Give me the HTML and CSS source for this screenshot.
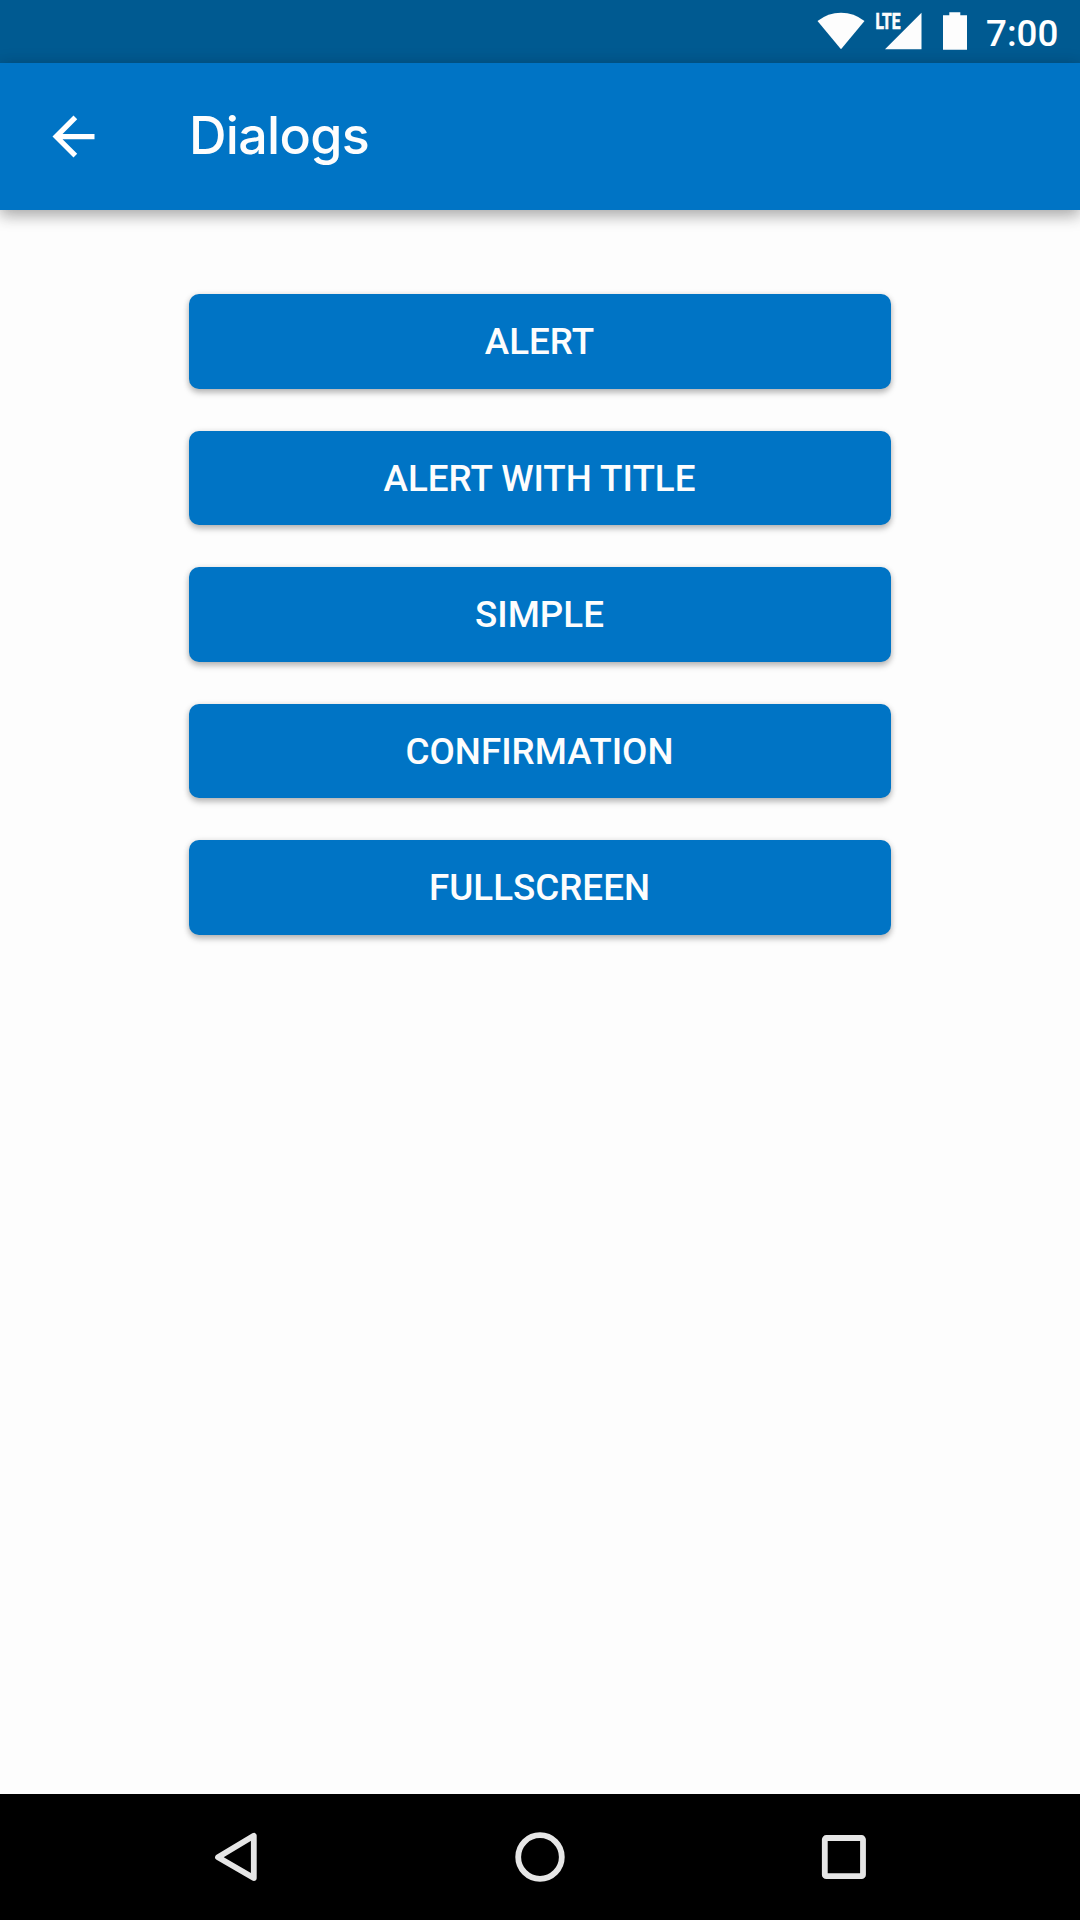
FILE: index.html
```html
<!DOCTYPE html>
<html lang="en">
<head>
<meta charset="utf-8">
<title>Dialogs</title>
<link rel="stylesheet" href="styles.css">
</head>
<body>
<div class="screen">
  <div class="status-bar">
    <svg class="status-icons" width="160" height="63" viewBox="0 0 160 63">
      <path d="M7.5 21Q18 12.7 31 12.7T54.5 21L31 49.3Z"/>
      <path d="M75 49.3L111.5 12.7V49.3Z"/>
      <text class="network" x="65.4" y="29.2" textLength="25" lengthAdjust="spacingAndGlyphs">LTE</text>
      <path d="M133 15.2H139.3V12.2H150.3V15.2H157V49.7H133Z"/>
    </svg>
    <span class="clock">7:00</span>
  </div>
  <header class="app-bar">
    <svg class="back" width="63" height="63" viewBox="0 0 24 24"><path d="M20 11H7.83l5.59-5.59L12 4l-8 8 8 8 1.41-1.41L7.83 13H20v-2z"/></svg>
    <h1 class="title">Dialogs</h1>
  </header>
  <main class="content">
    <button class="button">ALERT</button>
    <button class="button">ALERT WITH TITLE</button>
    <button class="button">SIMPLE</button>
    <button class="button">CONFIRMATION</button>
    <button class="button">FULLSCREEN</button>
  </main>
  <nav class="nav-bar">
    <svg class="nav-icon" width="84" height="84" viewBox="0 0 84 84"><path d="M24 42.2L59.8 20.8V63Z"/></svg>
    <svg class="nav-icon" width="84" height="84" viewBox="0 0 84 84"><circle cx="42" cy="42" r="21.8"/></svg>
    <svg class="nav-icon" width="84" height="84" viewBox="0 0 84 84"><rect x="22.8" y="23" width="38.2" height="38.2" rx="1.5"/></svg>
  </nav>
</div>
</body>
</html>
```
FILE: styles.css
```css
* {
  box-sizing: border-box;
}

body {
  margin: 0;
  font-family: Roboto, "Liberation Sans", sans-serif;
}

.screen {
  display: flex;
  flex-direction: column;
  width: 1080px;
  height: 1920px;
  background: #fdfdfd;
  overflow: hidden;
}

.status-bar {
  display: flex;
  align-items: center;
  justify-content: flex-end;
  gap: 16px;
  height: 63px;
  padding-right: 22px;
  background: #005a91;
  color: #fff;
}

.status-icons {
  fill: #fdfdfd;
}

.network {
  font-size: 22px;
  font-weight: 700;
  stroke: #fdfdfd;
  stroke-width: 0.7px;
}

.clock {
  width: 72px;
  padding-top: 5px;
  font-size: 36.75px;
  font-weight: 500;
  line-height: 44px;
  white-space: nowrap;
}

.app-bar {
  display: flex;
  align-items: center;
  gap: 84px;
  height: 147px;
  padding-left: 42px;
  background: #0074c5;
  box-shadow: 0 6px 14px rgba(0, 0, 0, 0.26), 0 2px 18px rgba(0, 0, 0, 0.12);
}

.back {
  fill: #fff;
}

.title {
  margin: 0;
  padding-bottom: 2px;
  color: #fdfdfd;
  font-family: Inter, Roboto, sans-serif;
  font-size: 52px;
  font-weight: 550;
  line-height: 64px;
  letter-spacing: -0.7px;
}

.content {
  display: flex;
  flex: 1;
  flex-direction: column;
  align-items: center;
  gap: 42px;
  padding-top: 84px;
}

.button {
  width: 702px;
  height: 94.5px;
  padding: 2px 1px 0 0;
  border: 0;
  border-radius: 10px;
  background: #0074c5;
  box-shadow: 0 4px 6px rgba(0, 0, 0, 0.22), 0 1px 6px rgba(0, 0, 0, 0.14);
  color: #fdfdfd;
  font: 500 36.75px/44px Roboto, "Liberation Sans", sans-serif;
}

.nav-bar {
  display: grid;
  grid-template-columns: repeat(3, 304px);
  place-content: center;
  place-items: center;
  height: 126px;
  background: #000;
}

.nav-icon {
  fill: none;
  stroke: #e6e6e6;
  stroke-width: 5.8;
  stroke-linejoin: round;
}
```
